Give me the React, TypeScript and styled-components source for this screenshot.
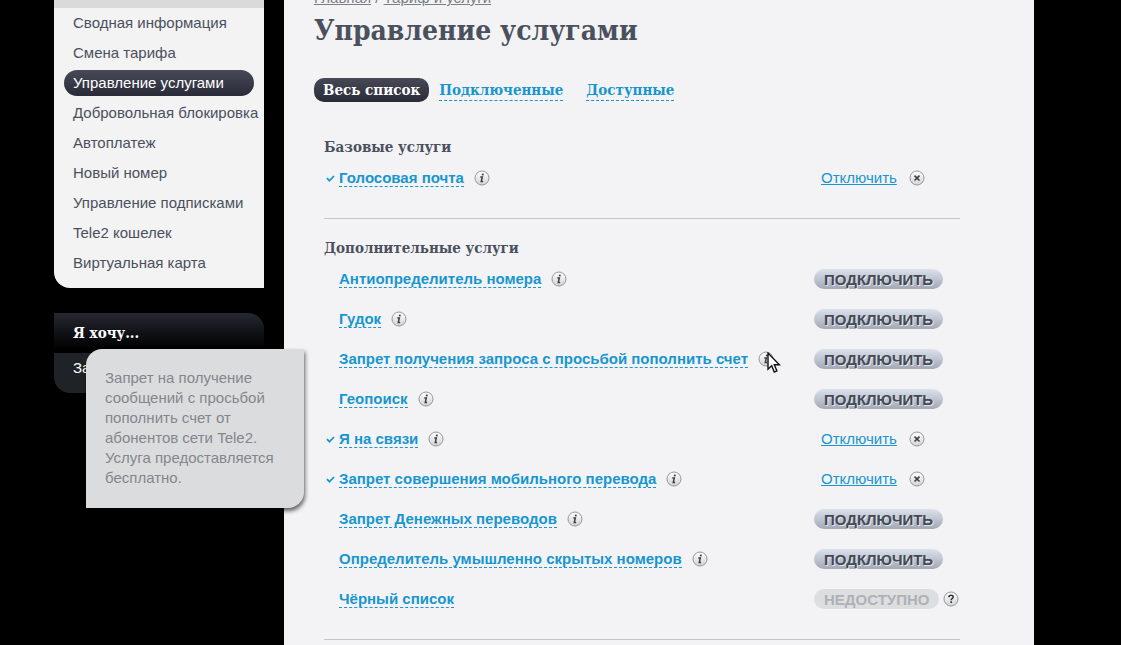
import React from "react";
import styled, { createGlobalStyle, css } from "styled-components";

const slab = `"DejaVu Serif Condensed", "DejaVu Serif", serif`;
const sans = `"Liberation Sans", Arial, sans-serif`;
const blue = "#1796cf";
const ink = "#4a505d";
const darkPill = "linear-gradient(#474957, #2a2b38)";

const GlobalStyle = createGlobalStyle`
  * { box-sizing: border-box; }
  html { background: #000; }
  body { margin: 0; background: #000; font: 15px/20px ${sans}; color: ${ink}; }
  #root { overflow: hidden; }
  ul { list-style: none; margin: 0; padding: 0; }
  button { font: inherit; border: 0; padding: 0; background: none; cursor: pointer; }
`;

const Shell = styled.div`
  position: relative;
  display: flex;
  align-items: stretch;
  gap: 20px;
  min-height: 100vh;
  padding: 0 87px 0 54px;
`;

const Sidebar = styled.aside`
  flex: 0 0 210px;
  min-width: 0;
  display: flex;
  flex-direction: column;
  gap: 25px;
`;

const Menu = styled.nav`
  padding-bottom: 10px;
  background: #f3f3f4;
  border-top: 8px solid #dadadb;
  border-bottom-left-radius: 16px;
`;

const MenuItem = styled.li`
  padding: 2px 10px;
  height: 30px;
`;

const MenuLink = styled.a<{ $active?: boolean }>`
  display: block;
  height: 26px;
  padding-left: 9px;
  border-radius: 13px;
  line-height: 26px;
  white-space: nowrap;
  text-decoration: none;
  color: ${(p) => (p.$active ? "#fff" : ink)};
  background: ${(p) => (p.$active ? darkPill : "none")};
`;

const Wish = styled.section`
  color: #fff;
`;

const WishTitle = styled.h2`
  margin: 0;
  padding-left: 19px;
  font: bold 15px/40px ${slab};
  background: linear-gradient(#262832, #000 90%);
  border-top-right-radius: 16px;
`;

const WishBody = styled.div`
  height: 40px;
  padding: 5px 19px;
  background: #1f2227;
  border-bottom-left-radius: 16px;
`;

const WishLink = styled.a`
  color: #fff;
  text-decoration: none;
`;

const Main = styled.main`
  flex: 1;
  min-width: 0;
  padding: 0 74px 0 30px;
  background: #f3f3f5;
`;

const Crumbs = styled.nav`
  margin-top: -12px;
  color: #7b8087;
  a { color: inherit; }
`;

const Title = styled.h1`
  margin: 5px 0 0;
  font: bold 28px/36px ${slab};
`;

const Tabs = styled.div`
  display: flex;
  margin-top: 29px;
`;

const Tab = styled.button<{ $active?: boolean }>`
  height: 24px;
  padding: ${(p) => (p.$active ? "0 9px" : "0 13px 0 10px")};
  border-radius: 10px;
  font: bold 15px/20px ${slab};
  white-space: nowrap;
  color: ${(p) => (p.$active ? "#fff" : blue)};
  background: ${(p) => (p.$active ? darkPill : "none")};
  span {
    display: block;
    ${(p) => !p.$active && css`border-bottom: 1px dashed ${blue};`}
  }
`;

const Group = styled.section`
  margin-left: 10px;
  padding: 18px 0 20px;
  border-bottom: 1px solid #c4c5c9;
  &:first-of-type { margin-top: 16px; }
`;

const GroupTitle = styled.h2`
  margin: 0;
  font: bold 15px/22px ${slab};
`;

const Row = styled.li`
  display: grid;
  grid-template-columns: 1fr 146px;
  align-items: center;
  height: 40px;
`;

const Name = styled.div`
  display: flex;
  align-items: center;
`;

const Mark = styled.span`
  flex: 0 0 15px;
  height: 16px;
  padding: 4px 0 0 2px;
  svg { display: block; }
`;

const ServiceLink = styled.a`
  margin-right: 10px;
  border-bottom: 1px dashed ${blue};
  line-height: 17px;
  font-weight: bold;
  color: ${blue};
  text-decoration: none;
  white-space: nowrap;
`;

const Round = styled.button`
  position: relative;
  flex: none;
  width: 16px;
  height: 16px;
  svg { display: block; }
`;

const Pointer = styled.svg`
  position: absolute;
  left: 9px;
  top: 1px;
`;

const Action = styled.div<{ $link?: boolean }>`
  display: flex;
  align-items: center;
  gap: ${(p) => (p.$link ? 12 : 4)}px;
  padding-left: ${(p) => (p.$link ? 7 : 0)}px;
`;

const OffLink = styled.a`
  color: ${blue};
`;

const Pill = styled.button`
  height: 20px;
  padding: 2px 10px 0;
  border-radius: 10px;
  font-weight: bold;
  line-height: 18px;
  color: #434955;
  text-shadow: 1px 1px 0 #e2e6ee;
  background: linear-gradient(#dbe2ec, #a3a8b5);
  &:disabled {
    color: #aeb1b6;
    text-shadow: none;
    background: #dddee0;
    cursor: default;
  }
`;

const Tip = styled.div`
  position: absolute;
  left: 86px;
  top: 349px;
  width: 218px;
  padding: 19px 19px 20px;
  border-radius: 16px 0 16px 0;
  color: #83878c;
  background: #dbdcde;
  box-shadow: 1px 3px 4px rgba(0, 0, 0, 0.6);
`;

function Badge({ kind }: { kind: "info" | "close" | "help" }) {
  return (
    <svg width="16" height="16" viewBox="0 0 16 16" aria-hidden="true">
      <defs>
        <linearGradient id={`face-${kind}`} x1="0" y1="0" x2="0" y2="1">
          <stop offset="0" stopColor="#fff" />
          <stop offset="1" stopColor="#d2d3d5" />
        </linearGradient>
      </defs>
      <circle cx="8" cy="8" r="7" fill={`url(#face-${kind})`} stroke="#96979a" />
      {kind === "info" && (
        <g stroke="#3c3d42" fill="none">
          <circle cx="8.8" cy="4.4" r="1" fill="#3c3d42" stroke="none" />
          <path d="M6.3 7h2l-1 4.4h1.8" strokeWidth="1.5" />
        </g>
      )}
      {kind === "close" && <path d="M5.5 5.7l5 4.8M10.5 5.7l-5 4.8" stroke="#3c3d42" strokeWidth="1.6" />}
      {kind === "help" && (
        <g stroke="#33343a" fill="none">
          <path d="M5.9 6.2c0-2.6 4.3-2.6 4.3-.2 0 1.5-2 1.5-2 3.3" strokeWidth="1.6" />
          <path d="M8.2 10.3v1.7" strokeWidth="1.7" />
        </g>
      )}
    </svg>
  );
}

type Service = {
  name: string;
  state: "on" | "off" | "none";
  info?: boolean;
  hovered?: boolean;
};

const base: Service[] = [{ name: "Голосовая почта", state: "on", info: true }];

const extra: Service[] = [
  { name: "Антиопределитель номера", state: "off", info: true },
  { name: "Гудок", state: "off", info: true },
  { name: "Запрет получения запроса с просьбой пополнить счет", state: "off", info: true, hovered: true },
  { name: "Геопоиск", state: "off", info: true },
  { name: "Я на связи", state: "on", info: true },
  { name: "Запрет совершения мобильного перевода", state: "on", info: true },
  { name: "Запрет Денежных переводов", state: "off", info: true },
  { name: "Определитель умышленно скрытых номеров", state: "off", info: true },
  { name: "Чёрный список", state: "none" },
];

const menu = [
  "Сводная информация",
  "Смена тарифа",
  "Управление услугами",
  "Добровольная блокировка",
  "Автоплатеж",
  "Новый номер",
  "Управление подписками",
  "Tele2 кошелек",
  "Виртуальная карта",
];

function ServiceRow({ name, state, info, hovered }: Service) {
  return (
    <Row>
      <Name>
        <Mark>
          {state === "on" && (
            <svg width="9" height="9" viewBox="0 0 9 9" aria-hidden="true">
              <path d="M1 4.2L3.4 6.8L8 2" fill="none" stroke={blue} strokeWidth="1.8" />
            </svg>
          )}
        </Mark>
        <ServiceLink href="#">{name}</ServiceLink>
        {info && (
          <Round aria-label="Описание" aria-describedby={hovered ? "tip" : undefined}>
            <Badge kind="info" />
            {hovered && (
              <Pointer width="14" height="22" viewBox="0 0 14 22">
                <path
                  d="M1 1v16.2l3.7-3.5 2.6 6.3 2.6-1.1-2.6-6.1h5.1z"
                  fill="#fff"
                  stroke="#111"
                  strokeWidth="1.4"
                />
              </Pointer>
            )}
          </Round>
        )}
      </Name>
      {state === "on" && (
        <Action $link>
          <OffLink href="#">Отключить</OffLink>
          <Round aria-label="Отключить услугу">
            <Badge kind="close" />
          </Round>
        </Action>
      )}
      {state === "off" && (
        <Action>
          <Pill>ПОДКЛЮЧИТЬ</Pill>
        </Action>
      )}
      {state === "none" && (
        <Action>
          <Pill disabled>НЕДОСТУПНО</Pill>
          <Round aria-label="Почему недоступно">
            <Badge kind="help" />
          </Round>
        </Action>
      )}
    </Row>
  );
}

function ServiceGroup({ title, items }: { title: string; items: Service[] }) {
  return (
    <Group>
      <GroupTitle>{title}</GroupTitle>
      <ul>
        {items.map((s) => (
          <ServiceRow key={s.name} {...s} />
        ))}
      </ul>
    </Group>
  );
}

export default function App() {
  return (
    <>
      <GlobalStyle />
      <Shell>
        <Sidebar>
          <Menu>
            <ul>
              {menu.map((m) => (
                <MenuItem key={m}>
                  <MenuLink href="#" $active={m === "Управление услугами"}>
                    {m}
                  </MenuLink>
                </MenuItem>
              ))}
            </ul>
          </Menu>
          <Wish>
            <WishTitle>Я хочу...</WishTitle>
            <WishBody>
              <WishLink href="#">За</WishLink>
            </WishBody>
          </Wish>
        </Sidebar>
        <Main>
          <Crumbs>
            <a href="#">Главная</a> / <a href="#">Тариф и услуги</a>
          </Crumbs>
          <Title>Управление услугами</Title>
          <Tabs>
            <Tab $active>
              <span>Весь список</span>
            </Tab>
            <Tab>
              <span>Подключенные</span>
            </Tab>
            <Tab>
              <span>Доступные</span>
            </Tab>
          </Tabs>
          <ServiceGroup title="Базовые услуги" items={base} />
          <ServiceGroup title="Дополнительные услуги" items={extra} />
        </Main>
        <Tip id="tip" role="tooltip">
          Запрет на получение сообщений с просьбой пополнить счет от абонентов сети Tele2. Услуга
          предоставляется бесплатно.
        </Tip>
      </Shell>
    </>
  );
}
